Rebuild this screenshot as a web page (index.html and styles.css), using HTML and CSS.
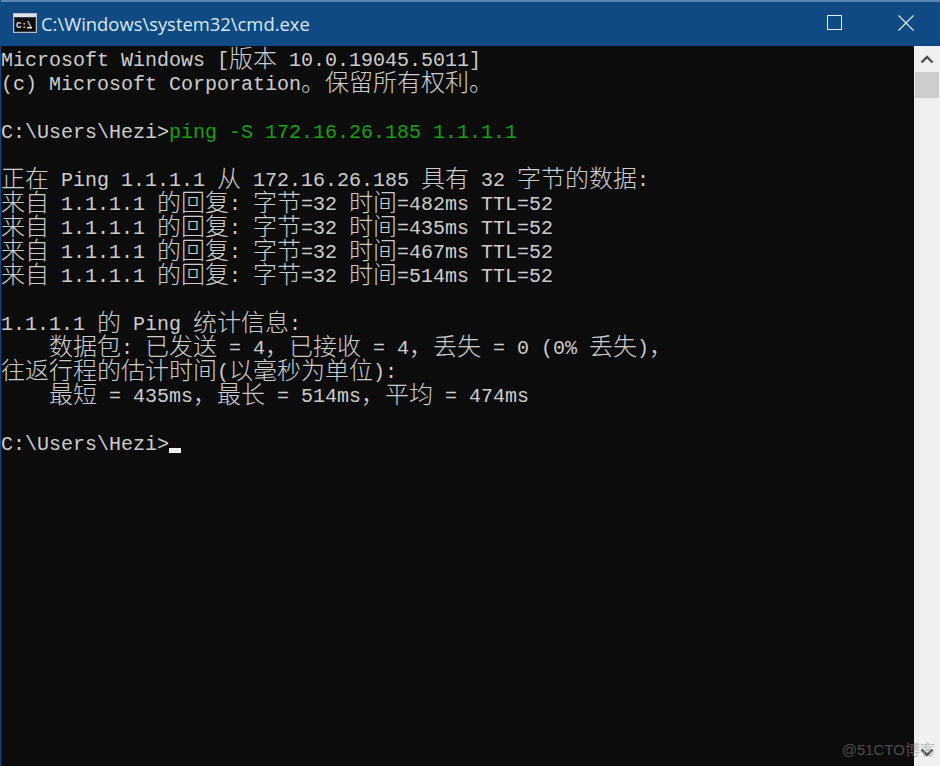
FILE: index.html
```html
<!DOCTYPE html>
<html lang="zh-CN">
<head>
<meta charset="utf-8">
<title>cmd.exe</title>
<link rel="stylesheet" href="styles.css">
</head>
<body>
<div class="window">
  <header class="titlebar">
    <svg class="app-icon" width="24" height="20" viewBox="0 0 24 20">
      <rect x="0.5" y="0.5" width="23" height="19" fill="#3a3f45" stroke="#b9bec4"/>
      <rect x="1" y="1" width="22" height="3" fill="#dfe3e8"/>
      <rect x="2" y="5" width="20" height="13" fill="#0c0c0c"/>
      <text x="3" y="14.5" class="app-icon-text">C:\</text>
      <rect x="14" y="14" width="5" height="1.5" fill="#e8e8e8"/>
    </svg>
    <span class="title">C:\Windows\system32\cmd.exe</span>
    <div class="controls">
      <svg class="ctl" width="16" height="16" viewBox="0 0 16 16"><rect x="0.5" y="0.5" width="14" height="14" fill="none" stroke="#e6f0f8"/></svg>
      <svg class="ctl ctl-close" width="16" height="16" viewBox="0 0 16 16"><path d="M0.5 0.5 L15.5 15.5 M15.5 0.5 L0.5 15.5" fill="none" stroke="#e6f0f8" stroke-width="1.1"/></svg>
    </div>
  </header>
  <div class="body">
    <main class="console">
      <div class="line">Microsoft Windows [<span class="z">版本</span> 10.0.19045.5011]</div>
      <div class="line">(c) Microsoft Corporation<span class="z">。保留所有权利。</span></div>
      <div class="line"></div>
      <div class="line">C:\Users\Hezi&gt;<span class="cmd">ping -S 172.16.26.185 1.1.1.1</span></div>
      <div class="line"></div>
      <div class="line"><span class="z">正在</span> Ping 1.1.1.1 <span class="z">从</span> 172.16.26.185 <span class="z">具有</span> 32 <span class="z">字节的数据</span>:</div>
      <div class="line"><span class="z">来自</span> 1.1.1.1 <span class="z">的回复</span>: <span class="z">字节</span>=32 <span class="z">时间</span>=482ms TTL=52</div>
      <div class="line"><span class="z">来自</span> 1.1.1.1 <span class="z">的回复</span>: <span class="z">字节</span>=32 <span class="z">时间</span>=435ms TTL=52</div>
      <div class="line"><span class="z">来自</span> 1.1.1.1 <span class="z">的回复</span>: <span class="z">字节</span>=32 <span class="z">时间</span>=467ms TTL=52</div>
      <div class="line"><span class="z">来自</span> 1.1.1.1 <span class="z">的回复</span>: <span class="z">字节</span>=32 <span class="z">时间</span>=514ms TTL=52</div>
      <div class="line"></div>
      <div class="line">1.1.1.1 <span class="z">的</span> Ping <span class="z">统计信息</span>:</div>
      <div class="line">    <span class="z">数据包</span>: <span class="z">已发送</span> = 4<span class="z">，已接收</span> = 4<span class="z">，丢失</span> = 0 (0% <span class="z">丢失</span>)<span class="z">，</span></div>
      <div class="line"><span class="z">往返行程的估计时间</span>(<span class="z">以毫秒为单位</span>):</div>
      <div class="line">    <span class="z">最短</span> = 435ms<span class="z">，最长</span> = 514ms<span class="z">，平均</span> = 474ms</div>
      <div class="line"></div>
      <div class="line">C:\Users\Hezi&gt;<span class="cursor"></span></div>
      <div class="watermark">@51CTO博客</div>
    </main>
    <aside class="scrollbar">
      <svg class="arrow" width="14" height="10" viewBox="0 0 14 10"><path d="M1.5 8.5 L7 3 L12.5 8.5" fill="none" stroke="#505050" stroke-width="2.4"/></svg>
      <div class="thumb"></div>
      <svg class="arrow arrow-down" width="14" height="10" viewBox="0 0 14 10"><path d="M1.5 1.5 L7 7 L12.5 1.5" fill="none" stroke="#505050" stroke-width="2.4"/></svg>
    </aside>
  </div>
</div>
</body>
</html>
```
FILE: styles.css
```css
html, body {
  margin: 0;
  padding: 0;
  background: #0c0c0c;
}
.window {
  width: 940px;
  height: 766px;
  display: flex;
  flex-direction: column;
  overflow: hidden;
  border-left: 1px solid #0f4a85;
  box-sizing: border-box;
}
.titlebar {
  height: 46px;
  flex: none;
  display: flex;
  align-items: center;
  background: #0f4a85;
  border-top: 2px solid #5b86b3;
  box-sizing: border-box;
  padding: 0 0 2px 12px;
}
.app-icon {
  flex: none;
}
.app-icon-text {
  font-family: "Liberation Mono", monospace;
  font-size: 9px;
  font-weight: bold;
  fill: #e8e8e8;
}
.title {
  margin-left: 4px;
  font-family: "Open Sans", "Liberation Sans", sans-serif;
  font-size: 18.4px;
  color: #dce8f3;
  white-space: nowrap;
}
.controls {
  margin-left: auto;
  display: flex;
  align-items: center;
  gap: 55px;
  padding-right: 26px;
}
.body {
  flex: 1;
  display: flex;
  min-height: 0;
}
.console {
  flex: 1;
  position: relative;
  z-index: 1;
  box-sizing: border-box;
  padding-top: 3px;
  background: #0c0c0c;
  color: #cccccc;
  font-family: "Liberation Mono", monospace;
  font-size: 20px;
}
.line {
  height: 24px;
  line-height: 24px;
  white-space: pre;
}
.z {
  font-family: "Noto Sans CJK SC", sans-serif;
  font-size: 24px;
  font-weight: 300;
  line-height: 0;
  vertical-align: -1px;
}
.cmd {
  color: #13a10e;
}
.cursor {
  display: inline-block;
  width: 12px;
  height: 5px;
  margin-bottom: -3px;
  background: #f0f0f0;
}
.watermark {
  position: absolute;
  right: -21px;
  bottom: 7px;
  font-family: "Liberation Sans", "Noto Sans CJK SC", sans-serif;
  font-size: 15px;
  color: rgba(140, 140, 140, 0.5);
  white-space: nowrap;
}
.scrollbar {
  width: 26px;
  flex: none;
  background: #f0f0f0;
  display: flex;
  flex-direction: column;
  align-items: center;
}
.arrow {
  margin-top: 8px;
  flex: none;
}
.thumb {
  width: 24px;
  height: 26px;
  margin-top: 8px;
  background: #cdcdcd;
}
.arrow-down {
  margin-top: auto;
  margin-bottom: 8px;
}
```
